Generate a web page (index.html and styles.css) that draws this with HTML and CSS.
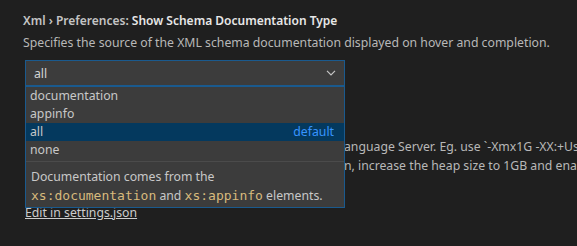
FILE: index.html
```html
<!DOCTYPE html>
<html>
<head>
<meta charset="utf-8">
<link rel="stylesheet" href="styles.css">
</head>
<body>
<div class="page">
  <div class="setting">
    <div class="title"><span class="cat">Xml › Preferences: </span><span class="name">Show Schema Documentation Type</span></div>
    <div class="desc">Specifies the source of the XML schema documentation displayed on hover and completion.</div>
    <div class="select-wrap">
      <div class="select">
        <span>all</span>
        <svg class="chev" width="10" height="6" viewBox="0 0 10 6"><path d="M1 0.8 L5 4.8 L9 0.8" fill="none" stroke="#c5c5c5" stroke-width="1.2"/></svg>
      </div>
      <div class="dropdown">
        <div class="opt">documentation</div>
        <div class="opt">appinfo</div>
        <div class="opt sel"><span>all</span><span class="def">default</span></div>
        <div class="opt">none</div>
        <div class="details">Documentation comes from the <code>xs:documentation</code> and <code>xs:appinfo</code> elements.</div>
      </div>
    </div>
  </div>
  <div class="setting next">
    <div class="title hidden-title"><span class="cat">Xml › Server: </span><span class="name">Vmargs</span></div>
    <div class="bgline"><span class="hid">Specifies extra VM arguments used to launch the XML L</span><span class="vis">anguage Server. Eg. use `-Xmx1G -XX:+UseG1GC</span></div>
    <div class="bgline"><span class="hid">to bypass class verificatio</span><span class="vis">n, increase the heap size to 1GB and enable</span></div>
    <div class="bgline"><span class="hid">with the G1 Garbage collector.</span></div>
    <a class="edit">Edit in settings.json</a>
  </div>
</div>
</body>
</html>
```
FILE: styles.css
```css
html, body {
  margin: 0;
  padding: 0;
  background: #1f1f1f;
}
body {
  width: 577px;
  height: 246px;
  overflow: hidden;
  font-family: "Noto Sans", sans-serif;
  font-size: 12.25px;
  color: #cccccc;
}
.page {
  padding: 12px 0 0 23px;
}
.title {
  font-size: 12px;
  line-height: 18px;
  font-weight: 600;
  white-space: nowrap;
}
.title .cat {
  color: #c4c4c4;
}
.title .name {
  color: #e7e7e7;
}
.hidden-title {
  visibility: hidden;
}
.desc {
  margin-top: 4px;
  line-height: 18px;
  color: #b8b8b8;
  white-space: nowrap;
}
.select-wrap {
  position: relative;
  margin-top: 8px;
  margin-left: 2px;
  width: 320px;
}
.select {
  box-sizing: border-box;
  height: 26px;
  border: 1px solid #1a5a8e;
  background: #3c3c3c;
  display: flex;
  align-items: center;
  justify-content: space-between;
  padding: 0 8px 0 8px;
  color: #d4d4d4;
}
.chev {
  display: block;
}
.dropdown {
  position: absolute;
  top: 26px;
  left: 0;
  width: 320px;
  box-sizing: border-box;
  background: #3c3c3c;
  border: 1px solid #1a5a8e;
  z-index: 5;
}
.opt {
  height: 18px;
  line-height: 18px;
  padding: 0 10px 0 4px;
  display: flex;
  justify-content: space-between;
  color: #c8c8c8;
}
.opt.sel {
  background: #04395e;
}
.def {
  color: #3794ff;
}
.details {
  margin-top: 2px;
  border-top: 1px solid #4b4b4b;
  padding: 5px 6px 2px 5px;
  line-height: 19px;
  color: #c8c8c8;
}
code {
  font-family: "DejaVu Sans Mono", monospace;
  font-size: 13px;
  color: #d7ba7d;
}
.next {
  margin-top: 33px;
}
.bgline {
  line-height: 19px;
  height: 19px;
  white-space: nowrap;
  color: #b8b8b8;
  display: flex;
  overflow: hidden;
}
.bgline .hid {
  flex: 0 0 321px;
  width: 321px;
  overflow: hidden;
  white-space: nowrap;
  visibility: hidden;
}
.bgline .vis {
  flex: 0 0 auto;
}
.edit {
  display: block;
  width: fit-content;
  margin-top: 10px;
  margin-left: 2px;
  line-height: 18px;
  color: #cccccc;
  text-decoration: underline;
}
```
